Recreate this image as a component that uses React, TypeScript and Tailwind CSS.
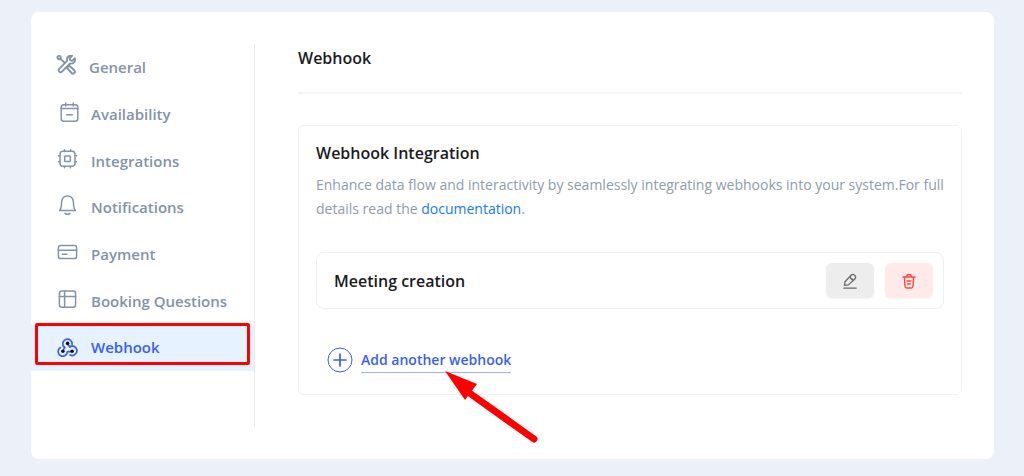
import type { ReactNode } from "react";

type IconProps = { children: ReactNode; className?: string; viewBox?: string };

function NavIcon({ children, className = "h-6 w-6", viewBox = "0 0 24 24" }: IconProps) {
  return (
    <svg
      aria-hidden="true"
      className={`${className} shrink-0`}
      viewBox={viewBox}
      fill="none"
      stroke="currentColor"
      strokeWidth="1.5"
      strokeLinecap="round"
      strokeLinejoin="round"
    >
      {children}
    </svg>
  );
}

const items: { label: string; icon: ReactNode; active?: boolean }[] = [
  {
    label: "General",
    icon: (
      <NavIcon className="h-6 w-[22px]" viewBox="0 0 22 24">
        <g strokeWidth="1.9">
          <circle cx="4.1" cy="2.6" r="1.7" />
          <path d="M5.4 3.900 9.600 7.800" />
          <path d="m12.800 12.200 1.500-1.500 5 4.600a1.900 1.900 0 0 1-2.700 2.700l-4.600-5" />
          <path d="M19.800 3.200l-2.600 2.600-2-.6-.5-2 2.400-2.300c-2.700-.9-5.600 1-5.100 4.100.1.600 0 .9-.4 1.300l-7.400 7.500a1.950 1.950 0 0 0 2.800 2.800l7.500-7.600c.4-.4.8-.5 1.300-.4 2.900.5 5-2.300 4-5.400Z" />
        </g>
      </NavIcon>
    ),
  },
  {
    label: "Availability",
    icon: (
      <NavIcon>
        <rect x="6.2" y="2.7" width="16.6" height="16.6" rx="2.5" />
        <path d="M6.200 6.600h16.600M10.700 1v3M18.300 1v3M11.700 12.700h5.600" />
      </NavIcon>
    ),
  },
  {
    label: "Integrations",
    icon: (
      <NavIcon>
        <rect x="5" y="2.2" width="15" height="15" rx="3" />
        <rect x="9.7" y="6.9" width="5.6" height="5.6" rx="0.8" />
        <path d="M9.500 2V.8M15.500 2V.8M9.500 17.500v1.200M15.500 17.500v1.200M4.800 6.700H3.500M4.800 12.700H3.500M20.200 6.700h1.300M20.200 12.700h1.300" />
      </NavIcon>
    ),
  },
  {
    label: "Notifications",
    icon: (
      <NavIcon>
        <path d="M4.500 15.500c1.400-1.200 1.800-3.200 1.900-5.200l.2-3.400C6.900 3.200 9.200.9 12.500.9s5.600 2.300 5.900 6l.2 3.400c.1 2 .5 4 1.900 5.200Z" />
        <path d="M10 18.300c1.500 1.200 3.500 1.200 5 0" />
      </NavIcon>
    ),
  },
  {
    label: "Payment",
    icon: (
      <NavIcon>
        <rect x="3.4" y="3.6" width="18.2" height="13" rx="2.2" />
        <path d="M3.400 8.200h18.200M7.300 12.300h4.600" />
      </NavIcon>
    ),
  },
  {
    label: "Booking Questions",
    icon: (
      <NavIcon>
        <rect x="4.4" y="2" width="16.2" height="16.2" rx="2.5" />
        <path d="M9.600 2v16.200M4.400 7.500h16.200" />
      </NavIcon>
    ),
  },
  {
    label: "Webhook",
    active: true,
    icon: (
      <NavIcon>
        <g strokeWidth="1.7">
          <path d="M9.400 11.400A4.700 4.700 0 1 1 17.100 8.300" />
          <path d="M14.700 10.900A4.600 4.600 0 1 1 15 18.800" />
          <path d="M5.400 11.600A4.600 4.600 0 1 0 12.300 16.100" />
          <path d="M12.400 15.600h3.400M9.800 11.200l-1 2M13.600 9.200l1.100 1.700" />
        </g>
        <g fill="#0b1020" stroke="none">
          <circle cx="12.6" cy="7.4" r="1.8" />
          <circle cx="7.9" cy="15.2" r="1.8" />
          <circle cx="17.1" cy="15.2" r="1.8" />
        </g>
      </NavIcon>
    ),
  },
];

function Sidebar() {
  return (
    <nav aria-label="Settings" className="w-56 shrink-0 border-r border-[#e8ecf2]">
      <ul className="grid h-[327px] grid-rows-7">
        {items.map((item) => (
          <li key={item.label} className={item.active ? "relative bg-[#e6f2ff] text-[#3b5ff0]" : "text-[#8393a9]"}>
            <a
              href="#"
              aria-current={item.active ? "page" : undefined}
              className="flex h-full items-center gap-3 pl-6 text-[15px] font-semibold whitespace-nowrap"
            >
              {item.icon}
              {item.label}
            </a>
            {item.active && (
              <div className="pointer-events-none absolute -top-px right-1 bottom-1.5 left-1 rounded-[2px] border-3 border-[#ff0000]" />
            )}
          </li>
        ))}
      </ul>
    </nav>
  );
}

function WebhookRow({ name }: { name: string }) {
  return (
    <div className="mt-[31px] flex items-center gap-[11px] rounded-lg border border-[#e8eff9] p-[10px]">
      <h3 className="flex-1 pl-[7px] text-base font-semibold text-[#1b1b1f]">{name}</h3>
      <button
        type="button"
        aria-label="Edit webhook"
        className="flex h-[35px] w-12 items-center justify-center rounded-md bg-[#ededed] text-[#6b6b70] shadow-xs"
      >
        <svg aria-hidden="true" className="h-4 w-4" viewBox="0 0 16 16" fill="none" stroke="currentColor" strokeWidth="1.3" strokeLinejoin="round" strokeLinecap="round">
          <path d="M2.500 12.300 3 8.700 9.300 2a2.100 2.100 0 0 1 3 0l.7.700a2.100 2.100 0 0 1 0 3L6.400 11.900Z" />
          <path d="M8 3.500c.5 2 1.700 3.300 3.700 3.700M1.800 15.200h12.400" />
        </svg>
      </button>
      <button
        type="button"
        aria-label="Delete webhook"
        className="flex h-[35px] w-12 items-center justify-center rounded-md bg-[#ffeaea] text-[#ff4440] shadow-xs"
      >
        <svg aria-hidden="true" className="h-4 w-4" viewBox="0 0 16 16" fill="none" stroke="currentColor" strokeWidth="1.4" strokeLinejoin="round" strokeLinecap="round">
          <path d="M2 4h12M5.500 3.800 6.300 1.700h3.400l.8 2.100M3.400 4.200l.6 9a2 2 0 0 0 2 1.800h4a2 2 0 0 0 2-1.800l.6-9M6 8h4M6.700 11h2.600" />
        </svg>
      </button>
    </div>
  );
}

export default function App() {
  return (
    <div className="min-h-screen bg-[#ebf0f9] pt-3 pr-[30px] pb-4 pl-[31px] font-['Open_Sans','Noto_Sans',sans-serif]">
      <div className="flex rounded-lg bg-white pt-8 pr-8 pb-8">
        <Sidebar />
        <main className="min-w-0 flex-1 pb-8 pl-[43px]">
          <h1 className="border-b-2 border-[#f3f5f7] pt-[2px] pb-[22px] text-base font-semibold text-[#1b1b1f]">
            Webhook
          </h1>
          <section className="mt-[31px] rounded-md border border-[#edf2f9] px-[17px] pt-[13px] pb-[21px]">
            <h2 className="text-base leading-7 font-semibold text-[#1b1b1f]">Webhook Integration</h2>
            <p className="mt-1.5 text-sm leading-6 text-[#8f9bad]">
              Enhance data flow and interactivity by seamlessly integrating webhooks into your system.For full details
              read the{" "}
              <a href="#" className="text-[#1677ff]">
                documentation
              </a>
              .
            </p>
            <WebhookRow name="Meeting creation" />
            <div className="relative mt-[38px] pl-[11px]">
              <button type="button" className="flex items-center gap-2 text-sm font-semibold text-[#3b5ff0]">
                <svg aria-hidden="true" className="h-[26px] w-[26px]" viewBox="0 0 26 26" fill="none" stroke="currentColor">
                  <circle cx="13" cy="13" r="12" strokeWidth="1" />
                  <path d="M13 7v12M7 13h12" strokeWidth="1.7" strokeLinecap="round" />
                </svg>
                <span className="border-b border-[#9db2fb] leading-6">Add another webhook</span>
              </button>
              <svg
                aria-hidden="true"
                className="pointer-events-none absolute top-6 left-[128px] h-[74px] w-[96px]"
                viewBox="0 0 96 74"
              >
                <path d="M24 21 90 68" stroke="#ff0000" strokeWidth="7" strokeLinecap="round" />
                <path d="M1 0 33 13 21 29Z" fill="#ff0000" />
              </svg>
            </div>
          </section>
        </main>
      </div>
    </div>
  );
}
